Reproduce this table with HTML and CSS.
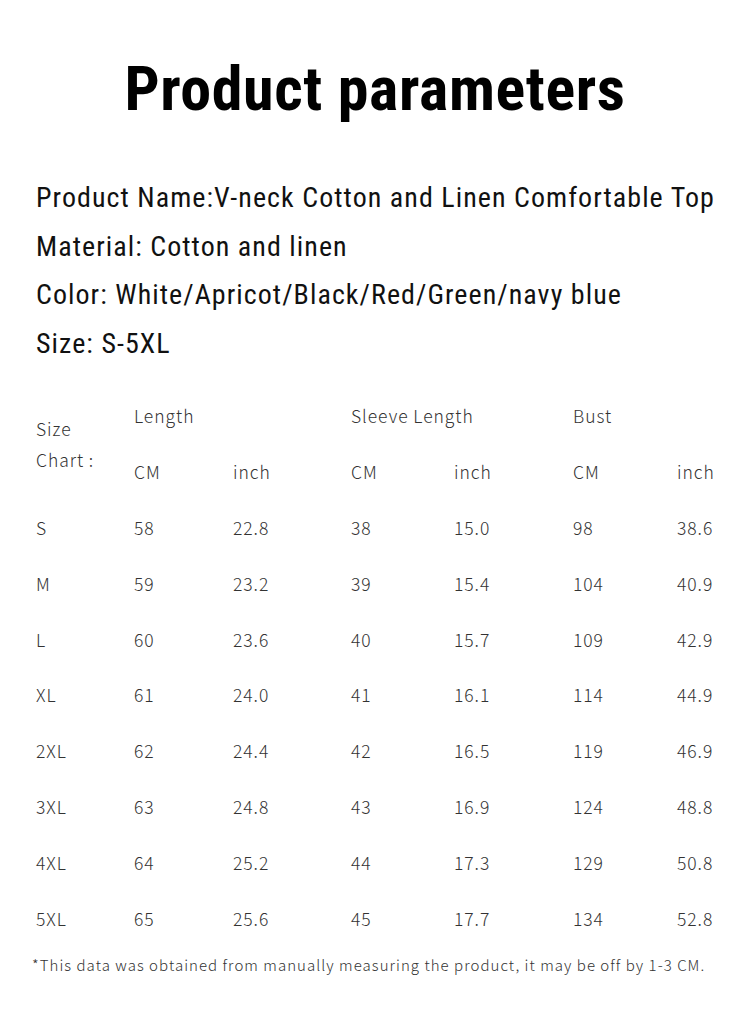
FILE: index.html
```html
<!DOCTYPE html>
<html>
<head>
<meta charset="utf-8">
<link rel="stylesheet" href="styles.css">
</head>
<body>
<div class="page">
  <h1 class="title">Product parameters</h1>
  <div class="info">
    <p class="info-line">Product Name:V-neck Cotton and Linen Comfortable Top</p>
    <p class="info-line">Material: Cotton and linen</p>
    <p class="info-line">Color: White/Apricot/Black/Red/Green/navy blue</p>
    <p class="info-line">Size: S-5XL</p>
  </div>
  <div class="chart">
    <div class="cell label"><span>Size</span><span>Chart :</span></div>
    <div class="cell group">Length</div>
    <div class="cell group">Sleeve Length</div>
    <div class="cell group">Bust</div>
    <div class="cell">CM</div><div class="cell">inch</div>
    <div class="cell">CM</div><div class="cell">inch</div>
    <div class="cell">CM</div><div class="cell">inch</div>

    <div class="cell">S</div><div class="cell">58</div><div class="cell">22.8</div><div class="cell">38</div><div class="cell">15.0</div><div class="cell">98</div><div class="cell">38.6</div>
    <div class="cell">M</div><div class="cell">59</div><div class="cell">23.2</div><div class="cell">39</div><div class="cell">15.4</div><div class="cell">104</div><div class="cell">40.9</div>
    <div class="cell">L</div><div class="cell">60</div><div class="cell">23.6</div><div class="cell">40</div><div class="cell">15.7</div><div class="cell">109</div><div class="cell">42.9</div>
    <div class="cell">XL</div><div class="cell">61</div><div class="cell">24.0</div><div class="cell">41</div><div class="cell">16.1</div><div class="cell">114</div><div class="cell">44.9</div>
    <div class="cell">2XL</div><div class="cell">62</div><div class="cell">24.4</div><div class="cell">42</div><div class="cell">16.5</div><div class="cell">119</div><div class="cell">46.9</div>
    <div class="cell">3XL</div><div class="cell">63</div><div class="cell">24.8</div><div class="cell">43</div><div class="cell">16.9</div><div class="cell">124</div><div class="cell">48.8</div>
    <div class="cell">4XL</div><div class="cell">64</div><div class="cell">25.2</div><div class="cell">44</div><div class="cell">17.3</div><div class="cell">129</div><div class="cell">50.8</div>
    <div class="cell">5XL</div><div class="cell">65</div><div class="cell">25.6</div><div class="cell">45</div><div class="cell">17.7</div><div class="cell">134</div><div class="cell">52.8</div>
  </div>
  <p class="note">*This data was obtained from manually measuring the product, it may be off by 1-3 CM.</p>
</div>
</body>
</html>
```

FILE: styles.css
```css
html, body {
  margin: 0;
  padding: 0;
  background: #fff;
}
.page {
  width: 750px;
  height: 1018px;
  overflow: hidden;
  padding-top: 52px;
  box-sizing: border-box;
}
.title {
  margin: 0;
  text-align: center;
  font-family: "Roboto Condensed", "Liberation Sans Narrow", "Roboto", sans-serif;
  font-weight: bold;
  font-size: 62px;
  letter-spacing: 0.6px;
  line-height: 74px;
  color: #000;
}
.info {
  margin-top: 48px;
  padding-left: 36px;
}
.info-line {
  margin: 0;
  font-family: "Roboto Condensed", "Liberation Sans Narrow", "Roboto", sans-serif;
  font-size: 28px;
  letter-spacing: 1.05px;
  line-height: 48.5px;
  color: #111;
  white-space: nowrap;
}
.chart {
  margin-top: 20px;
  padding-left: 36px;
  display: grid;
  grid-template-columns: 98px 99px 118px 103px 119px 104px 60px;
  grid-auto-rows: 55.8px;
  font-family: "Noto Sans CJK SC", "Noto Sans", sans-serif;
  font-weight: 300;
  font-size: 17.5px;
  letter-spacing: 0.95px;
  color: #333;
}
.cell {
  display: flex;
  align-items: center;
  white-space: nowrap;
}
.label {
  grid-row: span 2;
  flex-direction: column;
  align-items: flex-start;
  justify-content: center;
  line-height: 31px;
  padding-top: 0;
}
.group {
  grid-column: span 2;
}
.note {
  margin: 8px 0 0 32px;
  font-family: "Noto Sans CJK SC", "Noto Sans", sans-serif;
  font-weight: 300;
  font-size: 15px;
  letter-spacing: 1.05px;
  color: #333;
  white-space: nowrap;
}
```
